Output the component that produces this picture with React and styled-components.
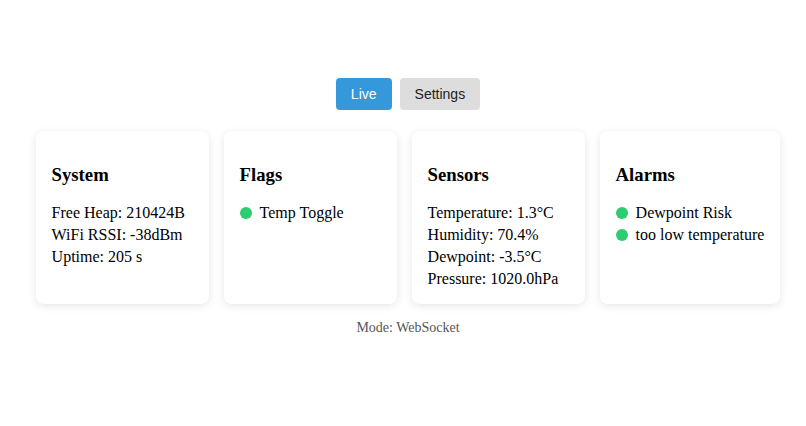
import React, { useState } from 'react';
import styled, { createGlobalStyle } from 'styled-components';

const GlobalStyle = createGlobalStyle`
  body {
    margin: 8px;
    background: #fff;
    font-family: "Liberation Serif", "Times New Roman", serif;
    color: #000;
  }
`;

const Page = styled.div`
  padding: 70px 0 0 10px;
  display: flex;
  flex-direction: column;
  align-items: center;
`;

const Tabs = styled.div`
  display: flex;
  gap: 8px;
  margin-bottom: 21px;
`;

const TabButton = styled.button`
  height: 32px;
  padding: 0 15px;
  border: none;
  border-radius: 4px;
  font-family: "Liberation Sans", Arial, sans-serif;
  font-size: 14px;
  cursor: pointer;
  background: ${props => (props.$active ? '#3498db' : '#dddddd')};
  color: ${props => (props.$active ? '#fff' : '#222')};
`;

const CardRow = styled.div`
  display: flex;
  gap: 15px;
  align-items: stretch;
`;

const Card = styled.div`
  min-width: 141px;
  padding: 14px 16px 14px;
  background: #fff;
  border-radius: 8px;
  box-shadow: 0 2px 8px rgba(0, 0, 0, 0.1);
`;

const CardTitle = styled.h3`
  font-size: 1.17em;
  margin: 1em 0 calc(1em - 2px);
`;

const Line = styled.div`
  font-size: 16px;
  line-height: 22px;
  display: flex;
  align-items: center;
  white-space: nowrap;
`;

const Dot = styled.span`
  width: 12px;
  height: 12px;
  border-radius: 50%;
  background: ${props => props.$color || '#2ecc71'};
  margin-right: 8px;
  flex: none;
`;

const Mode = styled.div`
  margin-top: 16px;
  font-size: 14px;
  color: #555;
`;

const cards = [
  { title: 'System', lines: ['Free Heap: 210424B', 'WiFi RSSI: -38dBm', 'Uptime: 205 s'] },
  { title: 'Flags', dots: ['Temp Toggle'] },
  {
    title: 'Sensors',
    lines: ['Temperature: 1.3°C', 'Humidity: 70.4%', 'Dewpoint: -3.5°C', 'Pressure: 1020.0hPa'],
  },
  { title: 'Alarms', dots: ['Dewpoint Risk', 'too low temperature'] },
];

const App = () => {
  const [tab, setTab] = useState('live');

  return (
    <>
      <GlobalStyle />
      <Page>
        <Tabs>
          <TabButton $active={tab === 'live'} onClick={() => setTab('live')}>Live</TabButton>
          <TabButton $active={tab === 'settings'} onClick={() => setTab('settings')}>Settings</TabButton>
        </Tabs>

        <CardRow>
          {cards.map(card => (
            <Card key={card.title}>
              <CardTitle>{card.title}</CardTitle>
              {card.lines && card.lines.map(l => <Line key={l}>{l}</Line>)}
              {card.dots && card.dots.map(l => (
                <Line key={l}><Dot />{l}</Line>
              ))}
            </Card>
          ))}
        </CardRow>

        <Mode>Mode: WebSocket</Mode>
      </Page>
    </>
  );
};

export default App;
